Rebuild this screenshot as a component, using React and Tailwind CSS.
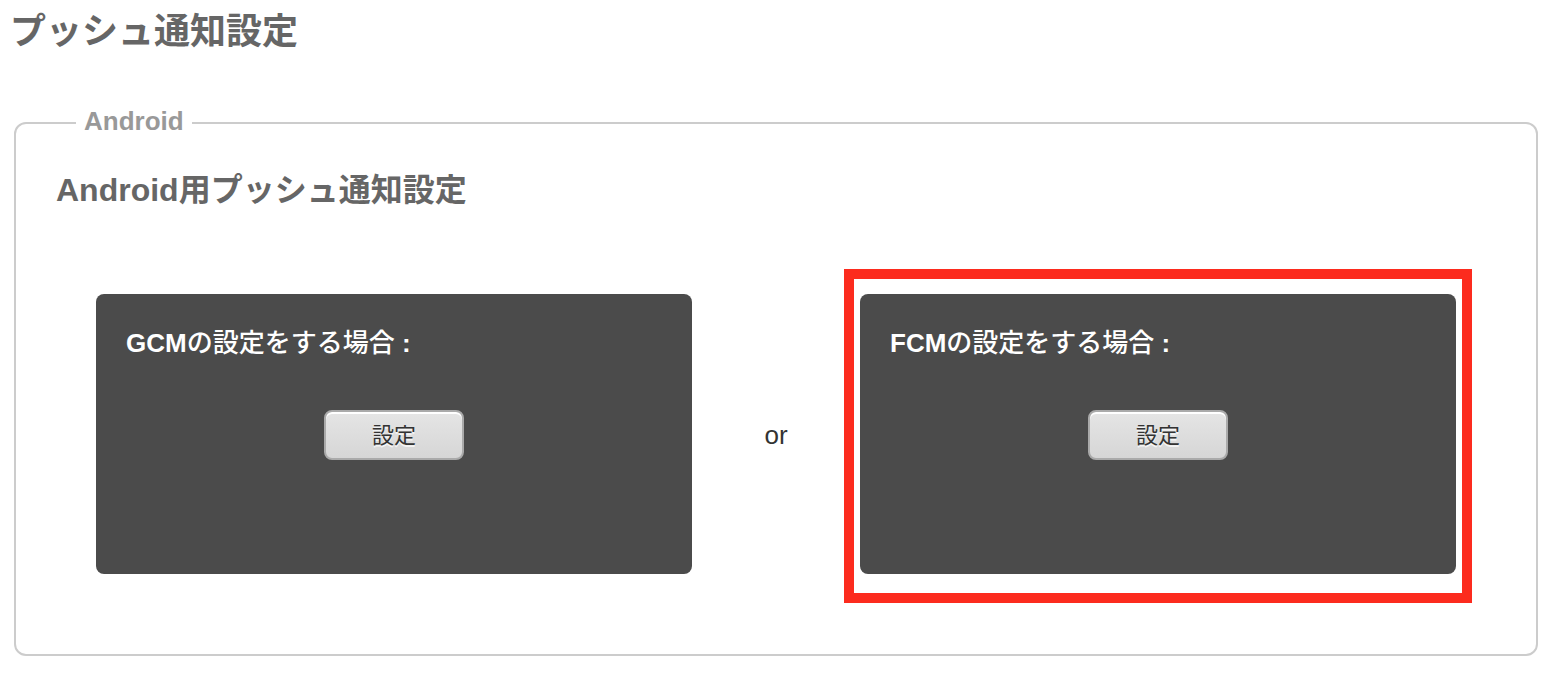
function SettingCard({ title, service, highlighted = false }) {
  return (
    <section className="relative h-[280px] flex-1 rounded-lg bg-[#4b4b4b] px-[30px] pt-7">
      <h3 className="text-[26px] leading-[42px] font-medium text-white">
        <span className="font-bold">{service}</span>
        {title}
        <span className="font-bold"> :</span>
      </h3>
      <div className="mt-[46px] flex justify-center">
        <button
          type="button"
          className="h-[50px] w-[140px] cursor-pointer rounded-lg border-2 border-[#aaaaaa] bg-linear-to-b from-[#e5e5e5] to-[#d6d6d6] pt-0.5 text-[22px] leading-8 text-[#333333] shadow-[inset_0_2px_0_#ffffff] [text-shadow:0_2px_0_#f4f4f4]"
        >
          設定
        </button>
      </div>
      {highlighted && (
        <div className="pointer-events-none absolute -inset-x-4 -top-[25px] -bottom-[29px] border-[10px] border-[#fc2b1e]" />
      )}
    </section>
  );
}

export default function App() {
  return (
    <main className="min-h-screen bg-white pr-[22px] pb-5 pl-[14px] font-['Liberation_Sans','Noto_Sans_CJK_JP',sans-serif] text-[#333333]">
      <h1 className="-ml-1 pt-1.5 text-4xl leading-[52px] font-bold text-[#666666]">プッシュ通知設定</h1>
      <fieldset className="mt-[50px] rounded-xl border-2 border-[#cccccc] px-10 pb-20">
        <legend className="ml-5 px-2 pb-1 text-[26px] leading-[26px] font-bold text-[#999999]">Android</legend>
        <h2 className="mt-7 text-[32px] leading-[48px] font-bold text-[#666666]">Android用プッシュ通知設定</h2>
        <div className="mt-20 flex items-center px-10">
          <SettingCard service="GCM" title="の設定をする場合" />
          <p className="w-[168px] pt-0.5 text-center text-[26px] leading-10">or</p>
          <SettingCard service="FCM" title="の設定をする場合" highlighted />
        </div>
      </fieldset>
    </main>
  );
}
